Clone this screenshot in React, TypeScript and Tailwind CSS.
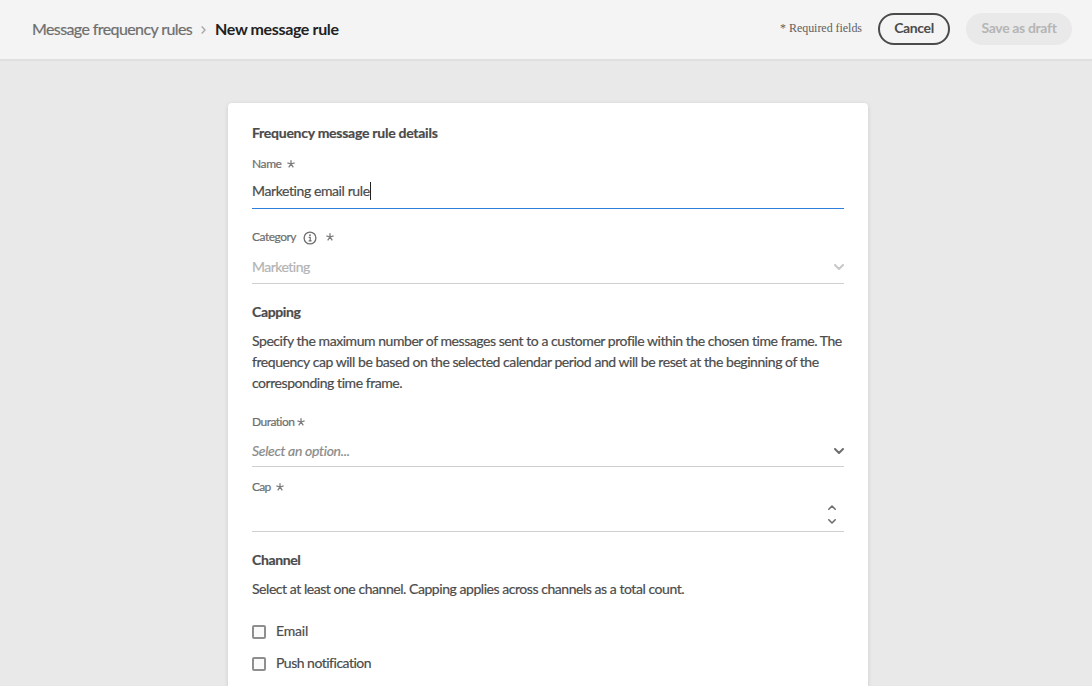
import type { ReactNode } from "react";

function Asterisk({ className = "" }: { className?: string }) {
  return (
    <svg className={`shrink-0 ${className}`} width="8" height="8" viewBox="0 0 8 8" fill="none" stroke="#7c7c7c" strokeWidth="1.3">
      <path d="M4 4V.2M4 4L.4 2.8M4 4l3.6-1.2M4 4L1.7 7.3M4 4l2.3 3.3" />
    </svg>
  );
}

function Chevron({ className }: { className: string }) {
  return (
    <svg className={`shrink-0 ${className}`} width="10" height="6" viewBox="0 0 10 6" fill="none" stroke="currentColor" strokeWidth="2" strokeLinecap="round" strokeLinejoin="round">
      <path d="M1 1l4 4 4-4" />
    </svg>
  );
}

function StepArrow({ up = false }: { up?: boolean }) {
  return (
    <svg width="8" height="5" viewBox="0 0 8 5" fill="none" stroke="#6e6e6e" strokeWidth="1.6" strokeLinecap="round" strokeLinejoin="round">
      <path d={up ? "M.8 4.2L4 1l3.2 3.2" : "M.8.8L4 4 7.2.8"} />
    </svg>
  );
}

function InfoIcon() {
  return (
    <svg className="ml-[7px] mt-[2px] shrink-0" width="14" height="14" viewBox="0 0 14 14" fill="none" stroke="#6e6e6e">
      <circle cx="7" cy="7" r="5.9" strokeWidth="1.3" />
      <path d="M5.7 6.4H7.2V9.8M5.6 9.9H8.6" strokeWidth="1.2" />
      <circle cx="7" cy="4.2" r=".9" fill="#6e6e6e" stroke="none" />
    </svg>
  );
}

function Heading({ children, className = "" }: { children: ReactNode; className?: string }) {
  return <h2 className={`h-5 text-sm leading-5 font-bold ${className}`}>{children}</h2>;
}

function Label({ children, className = "" }: { children: ReactNode; className?: string }) {
  return <div className={`flex h-4 text-xs leading-4 text-[#6e6e6e] ${className}`}>{children}</div>;
}

function Option({ children }: { children: ReactNode }) {
  return (
    <label className="flex h-5 items-center">
      <span className="mt-px size-[14px] rounded-[2px] border-2 border-[#8e8e8e] bg-[#fafafa]" />
      <span className="ml-[10px] text-sm leading-5">{children}</span>
    </label>
  );
}

export default function App() {
  return (
    <div className="flex h-[686px] flex-col overflow-hidden bg-[#e9e9e9] font-['Lato',sans-serif] text-[#4b4b4b]">
      <header className="flex h-[61px] shrink-0 items-start border-b-2 border-[#e0e0e0] bg-[#f4f4f4] pl-8 pr-5">
        <nav className="mt-[17px] flex h-6 items-center text-base leading-6 whitespace-nowrap">
          <span className="tracking-[-0.6px] text-[#6e6e6e] [-webkit-text-stroke:0.2px]">Message frequency rules</span>
          <svg className="mt-px ml-[9px]" width="5" height="8" viewBox="0 0 5 8" fill="none" stroke="#a8a8a8" strokeWidth="1.4">
            <path d="M.7.6L4 4 .7 7.4" />
          </svg>
          <span className="ml-[9px] font-bold tracking-[-0.36px] text-[#222]">New message rule</span>
        </nav>
        <div className="mt-[13px] ml-auto flex h-8 items-center">
          <span className="mr-4 pb-[2px] font-['Liberation_Serif',serif] text-xs leading-4 tracking-[-0.04px] whitespace-nowrap text-[#5f5f5f]">* Required fields</span>
          <button className="h-8 w-[72px] rounded-full border-2 border-[#4b4b4b] pb-[2px] text-sm leading-5 font-bold tracking-[-0.39px]">Cancel</button>
          <button className="ml-4 h-8 w-[106px] rounded-full bg-[#e9e9e9] pb-[2px] text-sm leading-5 font-bold tracking-[-0.34px] text-[#b5b5b5]">Save as draft</button>
        </div>
      </header>

      <main className="mt-[42px] ml-[228px] h-[700px] w-[640px] shrink-0 rounded-[4px] bg-white px-6 pt-5 shadow-[0_1px_4px_rgba(0,0,0,0.13)] [-webkit-text-stroke:0.2px]">
        <Heading className="tracking-[-0.26px]">Frequency message rule details</Heading>

        <Label className="mt-[13px]">
          <span className="tracking-[-0.41px]">Name</span>
          <Asterisk className="mt-1 ml-[5px]" />
        </Label>
        <div className="flex h-[37px] border-b border-[#2d7fdb] pt-[9px] text-sm leading-5">
          <span className="tracking-[-0.4px]">Marketing email rule</span>
          <span className="mt-px h-[18px] w-px bg-[#222]" />
        </div>

        <Label className="mt-5">
          <span className="tracking-[-0.5px]">Category</span>
          <InfoIcon />
          <Asterisk className="mt-1 ml-[9px]" />
        </Label>
        <div className="flex h-[39px] justify-between border-b border-[#cfcfcf] pt-3 text-sm leading-5 text-[#b3b3b3]">
          <span className="tracking-[-0.51px]">Marketing</span>
          <Chevron className="mt-[7px] text-[#c8c8c8]" />
        </div>

        <Heading className="mt-[18px] tracking-[-0.37px]">Capping</Heading>
        <p className="mt-2 text-sm leading-[21px] tracking-[-0.445px] whitespace-nowrap">
          Specify the maximum number of messages sent to a customer profile within the chosen time frame. The
          <br />
          frequency cap will be based on the selected calendar period and will be reset at the beginning of the
          <br />
          corresponding time frame.
        </p>

        <Label className="mt-[21px]">
          <span className="tracking-[-0.53px]">Duration</span>
          <Asterisk className="mt-1 ml-[3px]" />
        </Label>
        <div className="flex h-[37px] justify-between border-b border-[#cfcfcf] pt-[11px] text-sm leading-5">
          <span className="tracking-[-0.3px] text-[#8a8a8a] italic">Select an option...</span>
          <Chevron className="mt-[7px] text-[#6e6e6e]" />
        </div>

        <Label className="mt-3">
          <span className="tracking-[-0.7px]">Cap</span>
          <Asterisk className="mt-1 ml-[5px]" />
        </Label>
        <div className="flex h-[37px] flex-col items-end gap-[9px] border-b border-[#cfcfcf] pt-[10px] pr-2">
          <StepArrow up />
          <StepArrow />
        </div>

        <Heading className="mt-[18px] tracking-[-0.36px]">Channel</Heading>
        <p className="mt-2 text-sm leading-[21px] tracking-[-0.45px]">
          Select at least one channel. Capping applies across channels as a total count.
        </p>

        <div className="mt-[22px] flex flex-col gap-3">
          <Option><span className="tracking-[-0.2px]">Email</span></Option>
          <Option><span className="tracking-[-0.5px]">Push notification</span></Option>
        </div>
      </main>
    </div>
  );
}
